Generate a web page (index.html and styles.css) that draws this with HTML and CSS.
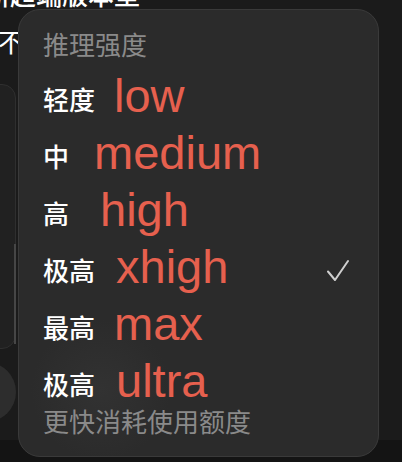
FILE: index.html
```html
<!DOCTYPE html>
<html lang="zh">
<head>
<meta charset="utf-8">
<link rel="stylesheet" href="styles.css">
</head>
<body>
<div class="bg">
  <div class="bg-title">新超端版本型</div>
  <div class="bg-line">不</div>
  <div class="bg-card"><div class="bg-scroll"></div></div>
  <div class="bg-circle"></div>
  <div class="bg-foot"></div>
</div>

<div class="menu">
  <div class="menu-head">推理强度</div>
  <div class="row"><span class="label">轻度</span><span class="tag tag-low">low</span></div>
  <div class="row"><span class="label">中</span><span class="tag tag-medium">medium</span></div>
  <div class="row"><span class="label">高</span><span class="tag tag-high">high</span></div>
  <div class="row"><span class="label">极高</span><span class="tag tag-xhigh">xhigh</span>
    <svg class="check" width="22" height="22" viewBox="0 0 22 22"><path d="M1 12.5 L8 21 L21 2" fill="none" stroke="#cfcfcf" stroke-width="2" stroke-linecap="round" stroke-linejoin="round"/></svg>
  </div>
  <div class="row"><span class="label">最高</span><span class="tag tag-max">max</span></div>
  <div class="row"><span class="label">极高</span><span class="tag tag-ultra">ultra</span></div>
  <div class="menu-foot">更快消耗使用额度</div>
</div>
</body>
</html>
```
FILE: styles.css
```css
html, body {
  margin: 0;
  padding: 0;
}
body {
  width: 402px;
  height: 462px;
  overflow: hidden;
  background: #1b1b1b;
  font-family: "Noto Sans CJK SC", "Noto Sans", sans-serif;
  position: relative;
}

.bg {
  display: flex;
  flex-direction: column;
}
.bg-title {
  font-size: 26px;
  line-height: 26px;
  margin-top: -19px;
  margin-left: -16px;
  color: #fff;
  white-space: nowrap;
  font-weight: 500;
}
.bg-line {
  font-size: 26px;
  line-height: 26px;
  margin-top: 21px;
  margin-left: -2px;
  color: #fff;
}
.bg-card {
  margin-top: 30px;
  margin-left: -30px;
  width: 46px;
  height: 265px;
  box-sizing: border-box;
  border: 1px solid #2f2f2f;
  border-radius: 14px;
  background: #212121;
  display: flex;
  flex-direction: column;
  justify-content: flex-end;
  align-items: flex-end;
  padding-bottom: 4px;
}
.bg-scroll {
  width: 2px;
  height: 100px;
  background: #464646;
  margin-right: -1px;
}
.bg-circle {
  margin-top: 13px;
  margin-left: -44px;
  width: 60px;
  height: 60px;
  border-radius: 50%;
  background: #2d2d2d;
}
.bg-foot {
  margin-top: 18px;
  height: 30px;
  background: #141414;
}

.menu {
  position: absolute;
  left: 18px;
  top: 9px;
  width: 361px;
  height: 448px;
  box-sizing: border-box;
  border: 1px solid #3a3a3a;
  border-radius: 22px;
  background: radial-gradient(circle at 82px 380px, #323232 0, #2b2b2b 70px);
  background-color: #2b2b2b;
  padding: 21px 29px 0 24px;
  display: flex;
  flex-direction: column;
}
.menu-head {
  font-size: 26px;
  line-height: 26px;
  color: #8a8a8a;
  margin-bottom: 13px;
}
.row {
  height: 57px;
  display: flex;
  align-items: center;
}
.label {
  font-size: 26px;
  line-height: 26px;
  color: #fff;
  font-weight: 500;
}
.tag {
  font-family: "Liberation Sans", Arial, sans-serif;
  font-size: 47px;
  line-height: 47px;
  padding-bottom: 6px;
  color: #e6604e;
}
.tag-low { margin-left: 19px; }
.tag-medium { margin-left: 25px; }
.tag-high { margin-left: 31px; }
.tag-xhigh { margin-left: 21px; }
.tag-max { margin-left: 19px; }
.tag-ultra { margin-left: 21px; }
.check {
  margin-left: auto;
}
.menu-foot {
  margin-top: -4px;
  font-size: 26px;
  line-height: 26px;
  color: #8a8a8a;
}
```
